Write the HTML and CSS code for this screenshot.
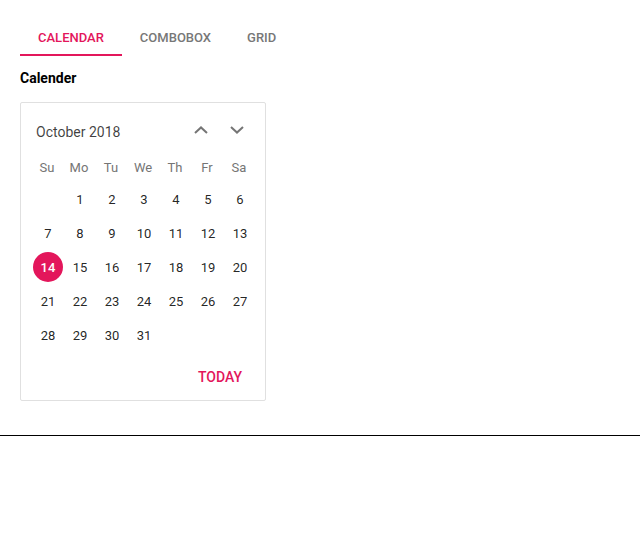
FILE: index.html
```html
<!DOCTYPE html>
<html>
<head>
<meta charset="utf-8">
<link rel="stylesheet" href="styles.css">
</head>
<body>
<div class="page">
  <div class="tabs">
    <div class="tab active">CALENDAR</div>
    <div class="tab">COMBOBOX</div>
    <div class="tab">GRID</div>
  </div>
  <h2 class="heading">Calender</h2>
  <div class="calendar">
    <div class="cal-header">
      <div class="title">October 2018</div>
      <div class="nav">
        <span class="nav-btn">
          <svg width="14" height="8" viewBox="0 0 14 8"><path d="M1 7L7 1.4L13 7" fill="none" stroke="#757575" stroke-width="2"/></svg>
        </span>
        <span class="nav-btn">
          <svg width="14" height="8" viewBox="0 0 14 8"><path d="M1 1L7 6.6L13 1" fill="none" stroke="#757575" stroke-width="2"/></svg>
        </span>
      </div>
    </div>
    <div class="grid">
      <div class="dn">Su</div><div class="dn">Mo</div><div class="dn">Tu</div><div class="dn">We</div><div class="dn">Th</div><div class="dn">Fr</div><div class="dn">Sa</div>
      <div class="d"></div><div class="d">1</div><div class="d">2</div><div class="d">3</div><div class="d">4</div><div class="d">5</div><div class="d">6</div>
      <div class="d">7</div><div class="d">8</div><div class="d">9</div><div class="d">10</div><div class="d">11</div><div class="d">12</div><div class="d">13</div>
      <div class="d"><span class="sel">14</span></div><div class="d">15</div><div class="d">16</div><div class="d">17</div><div class="d">18</div><div class="d">19</div><div class="d">20</div>
      <div class="d">21</div><div class="d">22</div><div class="d">23</div><div class="d">24</div><div class="d">25</div><div class="d">26</div><div class="d">27</div>
      <div class="d">28</div><div class="d">29</div><div class="d">30</div><div class="d">31</div><div class="d"></div><div class="d"></div><div class="d"></div>
    </div>
    <div class="footer">
      <span class="today">TODAY</span>
    </div>
  </div>
</div>
</body>
</html>
```
FILE: styles.css
```css
html, body {
  margin: 0;
  padding: 0;
  background: #fff;
  font-family: Roboto, "Liberation Sans", sans-serif;
}
.page {
  padding: 20px 20px 34px;
  border-bottom: 1px solid #000;
}
.tabs {
  display: flex;
  height: 36px;
}
.tab {
  padding: 0 18px;
  line-height: 36px;
  font-size: 13px;
  font-weight: 500;
  color: #777;
}
.tab.active {
  color: #e3165b;
  box-shadow: inset 0 -2px 0 #e3165b;
}
.heading {
  margin: 12px 0 14px;
  font-size: 14px;
  line-height: 20px;
  font-weight: 700;
  color: #000;
}
.calendar {
  width: 224px;
  border: 1px solid #e0e0e0;
  border-radius: 2px;
  padding: 9px 10px 5px;
}
.cal-header {
  height: 40px;
  display: flex;
  align-items: center;
  justify-content: space-between;
}
.title {
  padding-left: 5px;
  font-size: 14px;
  color: rgba(0,0,0,0.75);
}
.nav {
  display: flex;
}
.nav-btn {
  width: 36px;
  height: 36px;
  display: flex;
  align-items: center;
  justify-content: center;
  margin-top: -4px;
}
.grid {
  display: grid;
  grid-template-columns: repeat(7, 32px);
  grid-template-rows: 30px repeat(5, 34px);
}
.dn, .d {
  display: flex;
  align-items: center;
  justify-content: center;
  font-size: 13px;
}
.dn {
  color: #757575;
}
.d {
  padding-left: 2px;
  color: rgba(0,0,0,0.87);
}
.sel {
  flex: none;
  width: 30px;
  height: 30px;
  border-radius: 50%;
  background: #e3165b;
  color: #fff;
  font-weight: 500;
  display: flex;
  align-items: center;
  justify-content: center;
}
.footer {
  margin-top: 7px;
  height: 36px;
  display: flex;
  align-items: center;
  justify-content: flex-end;
}
.today {
  padding-right: 13px;
  font-size: 14px;
  font-weight: 500;
  color: #e3165b;
}
```
